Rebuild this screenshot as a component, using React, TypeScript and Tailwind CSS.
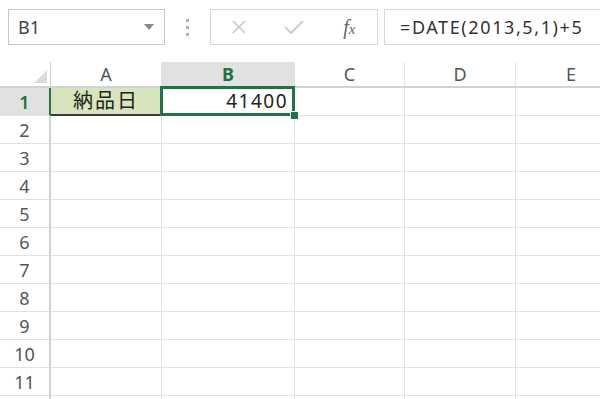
import React from 'react';

const cols = [
  { key: 'A', w: 'w-[111px]' },
  { key: 'B', w: 'w-[133px]' },
  { key: 'C', w: 'w-[110px]' },
  { key: 'D', w: 'w-[111px]' },
  { key: 'E', w: 'w-[111px]' },
];

const rows = [1, 2, 3, 4, 5, 6, 7, 8, 9, 10, 11, 12];

const font = { fontFamily: '"Noto Sans", "Liberation Sans", "Noto Sans CJK JP", sans-serif' };

function Toolbar() {
  return (
    <div className="flex items-center h-[55px] pt-[9px] pb-[10px] pl-[8px] bg-white">
      {/* name box */}
      <div className="flex items-center justify-between w-[157px] h-[36px] border border-[#c6c6c6] pl-[9px] pr-[10px]">
        <span className="text-[18px] text-[#444] leading-none">B1</span>
        <svg width="10" height="6" viewBox="0 0 10 6">
          <path d="M0 0 H10 L5 6 Z" fill="#8a8a8a" />
        </svg>
      </div>
      {/* grip dots */}
      <div className="flex flex-col gap-[4px] ml-[21px] mr-[21px]">
        <span className="w-[3px] h-[3px] bg-[#b5b5b5]" />
        <span className="w-[3px] h-[3px] bg-[#b5b5b5]" />
        <span className="w-[3px] h-[3px] bg-[#b5b5b5]" />
      </div>
      {/* buttons */}
      <div className="flex items-center w-[168px] h-[36px] border border-[#d6d6d6]">
        <div className="w-[56px] flex justify-center">
          <svg width="16" height="16" viewBox="0 0 16 16">
            <path d="M2 2 L14 14 M14 2 L2 14" stroke="#c8c8c8" strokeWidth="1.6" fill="none" />
          </svg>
        </div>
        <div className="w-[56px] flex justify-center">
          <svg width="20" height="16" viewBox="0 0 20 16">
            <path d="M1 8 L7 14 L19 2" stroke="#cfcfcf" strokeWidth="2.2" fill="none" />
          </svg>
        </div>
        <div className="w-[56px] flex justify-center">
          <span
            className="text-[20px] text-[#666] italic leading-none"
            style={{ fontFamily: '"Liberation Serif", "DejaVu Serif", serif' }}
          >
            f<span className="text-[15px]">x</span>
          </span>
        </div>
      </div>
      {/* formula */}
      <div className="flex items-center flex-1 h-[36px] ml-[6px] border border-r-0 border-[#d6d6d6] pl-[15px]">
        <span className="text-[18px] text-[#333] leading-none tracking-[1.6px]">=DATE(2013,5,1)+5</span>
      </div>
    </div>
  );
}

function Grid() {
  return (
    <div className="flex flex-col">
      {/* header row */}
      <div className="flex h-[26px]">
        <div className="relative w-[51px] shrink-0 border-r border-b-2 border-[#cfcfcf] border-b-[#d2d2d2] bg-white">
          <svg className="absolute right-[3px] bottom-[3px]" width="13" height="13" viewBox="0 0 13 13">
            <path d="M13 0 V13 H0 Z" fill="#dcdcdc" />
          </svg>
        </div>
        {cols.map((c) => (
          <div
            key={c.key}
            className={`${c.w} shrink-0 flex items-center justify-center border-r border-[#e1e1e1] border-b-2 ${
              c.key === 'B' ? 'bg-[#e1e1e1] text-[#217346] font-bold border-b-[#217346]' : 'bg-white text-[#555] border-b-[#d2d2d2]'
            } text-[18px] leading-none`}
          >
            {c.key}
          </div>
        ))}
      </div>
      {rows.map((r) => (
        <div key={r} className="flex h-[28px]">
          <div
            className={`w-[51px] shrink-0 flex items-center justify-center border-b border-[#e1e1e1] text-[18px] leading-none ${
              r === 1
                ? 'bg-[#e1e1e1] text-[#217346] font-semibold border-r-2 border-r-[#217346]'
                : 'bg-white text-[#555] border-r-2 border-r-[#d0d0d0]'
            }`}
          >
            {r < 12 ? r : ''}
          </div>
          {cols.map((c) => {
            if (r === 1 && c.key === 'A') {
              return (
                <div
                  key={c.key}
                  className={`${c.w} shrink-0 flex items-center justify-center bg-[#d8e4bc] border-r border-[#e1e1e1] border-b-2 border-b-[#3a3a3a] text-[20px] text-[#222] leading-none tracking-[2px]`}
                >
                  納品日
                </div>
              );
            }
            if (r === 1 && c.key === 'B') {
              return (
                <div
                  key={c.key}
                  className={`${c.w} shrink-0 relative flex items-center justify-end pr-[6px] border-r border-b border-[#e1e1e1] text-[19px] text-[#222] leading-none tracking-[1.5px]`}
                >
                  41400
                  <div className="absolute -left-[2px] -top-[2px] -right-[1px] -bottom-[1px] border-[3px] border-[#217346]" />
                  <div className="absolute -right-[5px] -bottom-[5px] w-[9px] h-[9px] bg-[#217346] border border-white" />
                </div>
              );
            }
            return <div key={c.key} className={`${c.w} shrink-0 border-r border-b border-[#e1e1e1]`} />;
          })}
        </div>
      ))}
    </div>
  );
}

export default function App() {
  return (
    <div className="w-[600px] h-[399px] overflow-hidden bg-white" style={font}>
      <Toolbar />
      <div className="h-[7px]" />
      <Grid />
    </div>
  );
}
